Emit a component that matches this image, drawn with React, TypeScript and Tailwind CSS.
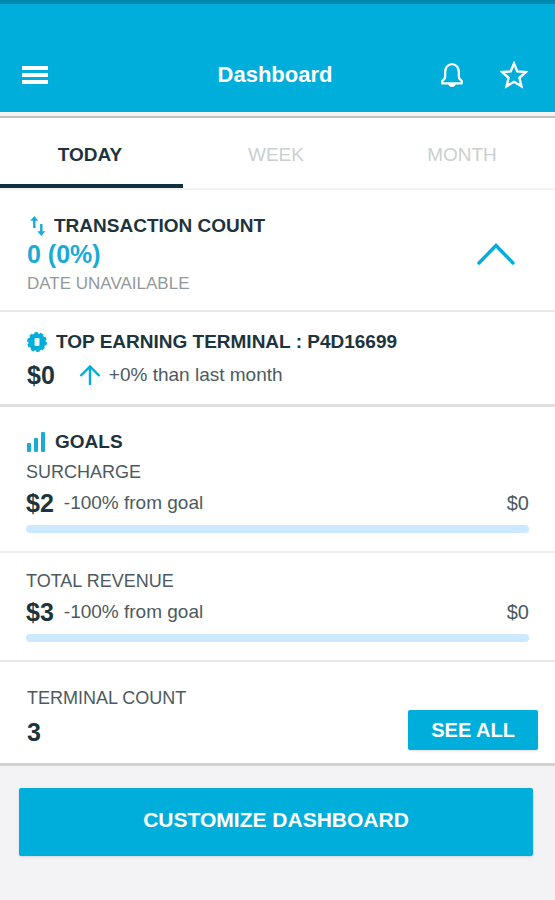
import React, { useState } from "react";

interface GoalData {
  label: string;
  amount: string;
  change: string;
  target: string;
  progress: number;
}

const tabs = ["TODAY", "WEEK", "MONTH"];

const goals: GoalData[] = [
  {
    label: "SURCHARGE",
    amount: "$2",
    change: "-100% from goal",
    target: "$0",
    progress: 0,
  },
  {
    label: "TOTAL REVENUE",
    amount: "$3",
    change: "-100% from goal",
    target: "$0",
    progress: 0,
  },
];

const MenuIcon = () => (
  <svg width="26" height="18" viewBox="0 0 26 18" fill="currentColor">
    <rect width="26" height="4" />
    <rect y="7" width="26" height="4" />
    <rect y="14" width="26" height="4" />
  </svg>
);

const BellIcon = () => (
  <svg
    width="24"
    height="26"
    viewBox="0 0 24 26"
    fill="none"
    stroke="currentColor"
    strokeWidth="2.2"
    strokeLinejoin="round"
  >
    <path d="M12 2C7.800 2.800 5.200 5.800 5.200 10v4.600c0 1.900-.8 3-2.900 4.200v2.600h19.400v-2.600c-2.100-1.200-2.900-2.300-2.900-4.200V10c0-4.200-2.600-7.200-6.800-8z" />
    <path
      d="M8 21.500h8c-.4 2.400-1.900 3.500-4 3.500s-3.600-1.100-4-3.500z"
      fill="currentColor"
      stroke="none"
    />
  </svg>
);

const StarIcon = () => (
  <svg
    width="28"
    height="28"
    viewBox="0 0 28 28"
    fill="none"
    stroke="currentColor"
    strokeWidth="2.4"
  >
    <path d="M14 2.500l3.300 7.900 8.600.7-6.500 5.700 2 8.500-7.400-4.500-7.400 4.500 2-8.500-6.500-5.700 8.600-.7z" />
  </svg>
);

const TransferIcon = () => (
  <svg width="16" height="20" viewBox="0 0 16 20" fill="currentColor">
    <path d="M4.300 0L8.300 4.800H5.500V12H3.100V4.800H.3z" />
    <path d="M11.300 20L7.300 15.200h2.800V8h2.400v7.200h2.800z" />
  </svg>
);

const ChipIcon = () => (
  <svg width="20" height="20" viewBox="0 0 20 20">
    <circle cx="10" cy="10" r="8.800" fill="currentColor" />
    <circle
      cx="10"
      cy="10"
      r="9"
      fill="none"
      stroke="currentColor"
      strokeWidth="1.800"
      strokeDasharray="3.500 2.150"
    />
    <rect x="7.500" y="6" width="5" height="8" rx="1" fill="#e6f8fd" />
  </svg>
);

const BarsIcon = () => (
  <svg width="20" height="20" viewBox="0 0 20 20" fill="currentColor">
    <rect x="1" y="11" width="4" height="9" rx="1" />
    <rect x="8" y="6" width="4" height="14" rx="1" />
    <rect x="15" width="4" height="20" rx="1" />
  </svg>
);

const ArrowUpIcon = () => (
  <svg
    width="22"
    height="22"
    viewBox="0 0 22 22"
    fill="none"
    stroke="currentColor"
    strokeWidth="2.4"
  >
    <path d="M11 21V2.500M1.500 12L11 2.500l9.500 9.500" />
  </svg>
);

const ChevronIcon = () => (
  <svg
    width="40"
    height="24"
    viewBox="0 0 40 24"
    fill="none"
    stroke="currentColor"
    strokeWidth="3.4"
    strokeLinecap="round"
  >
    <path d="M3 20L20 2.500L37 20" />
  </svg>
);

const Goal: React.FC<{ data: GoalData }> = ({ data }) => (
  <>
    <h3 className="text-lg leading-6 text-[#4c5a60]">{data.label}</h3>
    <div className="mt-[3px] flex items-center leading-8">
      <span className="text-[25px] font-bold">{data.amount}</span>
      <span className="ml-2.5 text-[19px] text-[#4c5a60]">{data.change}</span>
      <span className="ml-auto text-xl text-[#4c5a60]">{data.target}</span>
    </div>
    <div
      role="progressbar"
      aria-label={data.label}
      aria-valuenow={data.progress}
      className="mt-1.5 h-2 overflow-hidden rounded-sm bg-[#cce9ff]"
    >
      <div
        className="h-full bg-[#00aedb]"
        style={{ width: `${data.progress}%` }}
      ></div>
    </div>
  </>
);

const App: React.FC = () => {
  const [activeTab, setActiveTab] = useState<string>("TODAY");
  const [expanded, setExpanded] = useState<boolean>(true);

  return (
    <div className="min-h-screen overflow-x-hidden bg-[#f3f3f6] font-['Liberation_Sans',Arial,sans-serif] text-[#1d343c]">
      <header className="grid grid-cols-[1fr_auto_1fr] items-center border-t-4 border-[#0089b0] bg-[#00aedb] pt-[52px] pr-[27px] pb-[18px] pl-[22px] text-white">
        <button aria-label="Menu" className="justify-self-start">
          <MenuIcon />
        </button>
        <h1 className="text-[22px] leading-[38px] font-bold">Dashboard</h1>
        <div className="flex items-center gap-9 justify-self-end">
          <button aria-label="Notifications">
            <BellIcon />
          </button>
          <button aria-label="Favorites">
            <StarIcon />
          </button>
        </div>
      </header>

      <main className="mt-1 border-t-2 border-b-3 border-t-[#c4bfc1] border-b-[#d2d2d3] bg-white">
        <div
          role="tablist"
          className="-ml-[3px] grid grid-cols-3 border-b-2 border-[#f2f2f2]"
        >
          {tabs.map((tab) => (
            <button
              key={tab}
              role="tab"
              aria-selected={activeTab === tab}
              onClick={() => setActiveTab(tab)}
              className={
                activeTab === tab
                  ? "h-[70px] border-b-4 border-[#10303b] pt-2 text-[19px] font-bold"
                  : "h-[70px] border-b-4 border-transparent pt-2 text-[19px] text-[#cbcfd0]"
              }
            >
              {tab}
            </button>
          ))}
        </div>

        <section className="flex items-center justify-between border-b-2 border-[#e8e8e8] px-[27px] pt-6 pb-3.5">
          <div>
            <h2 className="flex items-center gap-2 pl-[3px] text-[19px] leading-6 font-bold">
              <span className="text-[#18abd6]">
                <TransferIcon />
              </span>
              TRANSACTION COUNT
            </h2>
            <p className="text-[25px] leading-8 font-bold text-[#18abd6]">
              0 (0%)
            </p>
            {expanded && (
              <p className="mt-0.5 text-[17px] leading-6 text-[#92999c]">
                DATE UNAVAILABLE
              </p>
            )}
          </div>
          <button
            aria-label="Toggle transaction count"
            aria-expanded={expanded}
            onClick={() => setExpanded(!expanded)}
            className="mr-3 text-[#00aedb]"
          >
            <ChevronIcon />
          </button>
        </section>

        <section className="border-b-3 border-[#dfdfdf] px-[27px] pt-[18px] pb-3">
          <h2 className="flex items-center gap-[9px] text-[19px] leading-6 font-bold">
            <span className="text-[#00aedb]">
              <ChipIcon />
            </span>
            TOP EARNING TERMINAL : P4D16699
          </h2>
          <div className="mt-1 flex items-center leading-[34px]">
            <span className="text-[25px] font-bold">$0</span>
            <span className="mr-2 ml-6 text-[#00aedb]">
              <ArrowUpIcon />
            </span>
            <span className="text-[19px] text-[#4c5a60]">
              +0% than last month
            </span>
          </div>
        </section>

        <section className="border-b-2 border-[#eeeeee] px-[26px] pt-[23px] pb-[18px]">
          <h2 className="mb-1.5 flex items-center gap-[9px] text-[19px] leading-6 font-bold">
            <span className="text-[#18abd6]">
              <BarsIcon />
            </span>
            GOALS
          </h2>
          <Goal data={goals[0]} />
        </section>

        <section className="border-b-2 border-[#e8e8e8] px-[26px] pt-4 pb-[18px]">
          <Goal data={goals[1]} />
        </section>

        <section className="flex items-end justify-between pt-6 pr-[17px] pb-[13px] pl-[27px]">
          <div>
            <h3 className="text-lg leading-6 text-[#4c5a60]">TERMINAL COUNT</h3>
            <p className="mt-1 text-[25px] leading-9 font-bold">3</p>
          </div>
          <button className="h-10 rounded-xs bg-[#00aedb] px-[23px] text-xl font-bold text-white shadow">
            SEE ALL
          </button>
        </section>
      </main>

      <footer className="py-[22px] pr-[22px] pl-[19px]">
        <button className="h-[68px] w-full rounded-xs bg-[#00aedb] pb-1 text-[21px] font-bold text-white shadow">
          CUSTOMIZE DASHBOARD
        </button>
      </footer>
    </div>
  );
};

export default App;
